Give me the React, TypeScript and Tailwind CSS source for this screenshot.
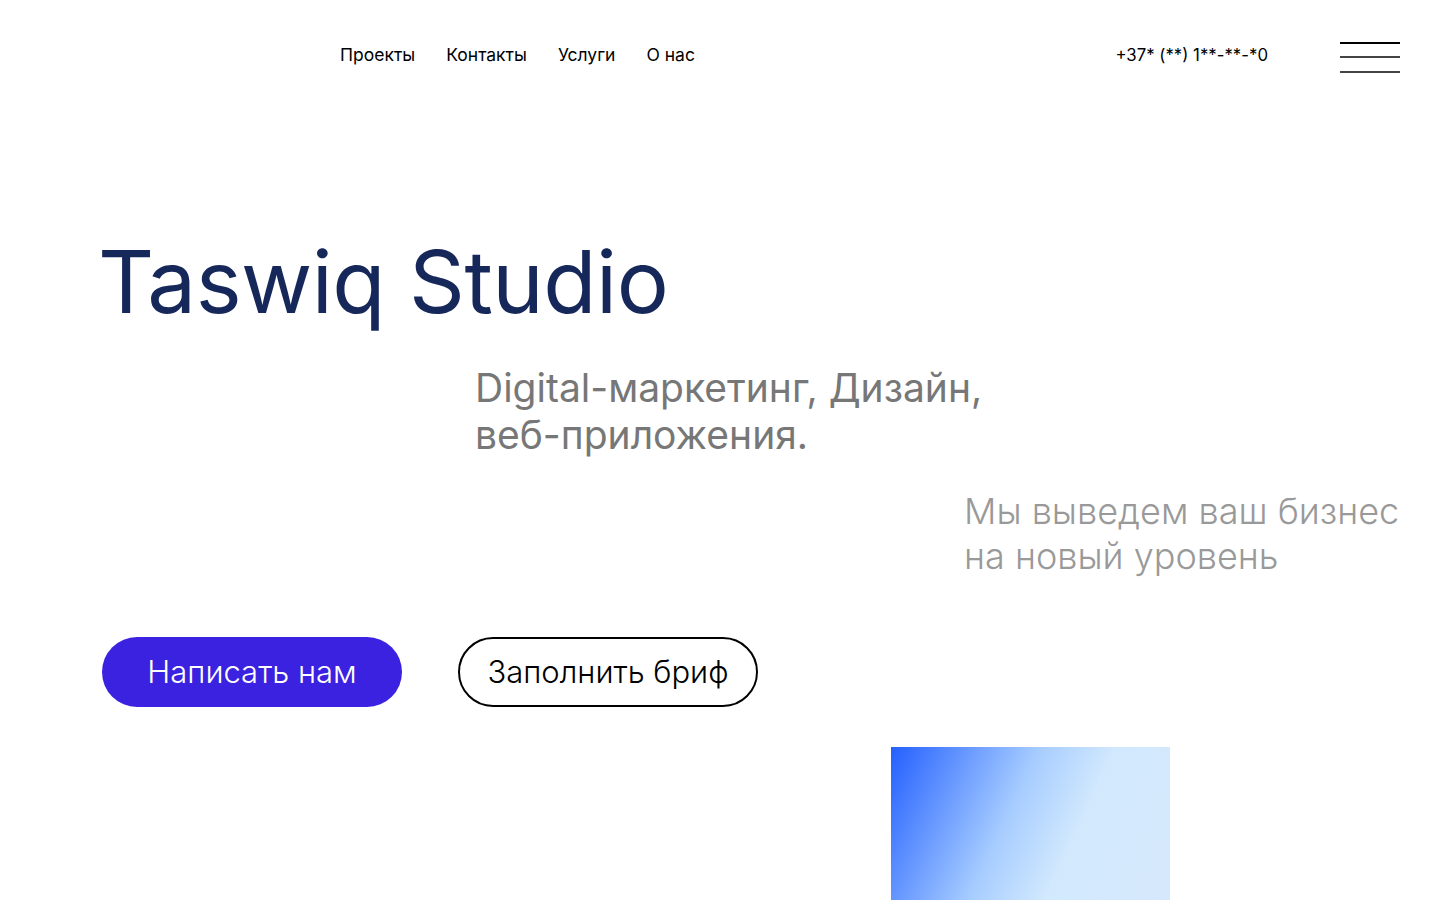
const links = ['Проекты', 'Контакты', 'Услуги', 'О нас'];

export default function App() {
  return (
    <div className="min-h-[900px] bg-white overflow-hidden" style={{ fontFamily: 'Inter, "Noto Sans", sans-serif' }}>
      <header className="flex items-center h-[110px] pl-[340px] pr-[40px]">
        <nav className="flex items-center gap-[31px] text-[17.5px] text-black">
          {links.map((l) => (
            <a key={l} href="#" className="leading-none">{l}</a>
          ))}
        </nav>
        <div className="ml-auto flex items-center gap-[72px]">
          <span className="text-[16.8px] text-black leading-none">+37* (**) 1**-**-*0</span>
          <button className="flex flex-col gap-[12.5px] w-[60px] pt-[4px] pb-0">
            <span className="block h-[2px] bg-black" />
            <span className="block h-[2px] bg-[#444]" />
            <span className="block h-[2px] bg-[#444]" />
          </button>
        </div>
      </header>

      <section className="pl-[98px] pt-[128px]">
        <h1 className="text-[87px] leading-none text-[#16275a] tracking-[-0.5px]">Taswiq Studio</h1>
        <p className="ml-[377px] mt-[39px] text-[39px] leading-[47px] text-[#777]">
          Digital-маркетинг, Дизайн,<br />веб-приложения.
        </p>
        <p className="ml-[866px] mt-[31px] text-[36px] leading-[45px] font-light text-[#999]">
          Мы выведем ваш бизнес<br />на новый уровень
        </p>
        <div className="flex gap-[56px] mt-[58px] ml-[4px]">
          <button className="w-[300px] h-[70px] rounded-full bg-[#3b22e0] text-white text-[31px] font-light">
            Написать нам
          </button>
          <button className="w-[300px] h-[70px] rounded-full border-2 border-black text-black text-[31px] font-light">
            Заполнить бриф
          </button>
        </div>
        <div className="ml-[793px] mt-[40px] w-[279px] h-[160px] bg-[linear-gradient(115deg,#2460ff_0%,#a6ccff_42%,#d2e9fd_64%,#d6e8fb_100%)]" />
      </section>
    </div>
  );
}
